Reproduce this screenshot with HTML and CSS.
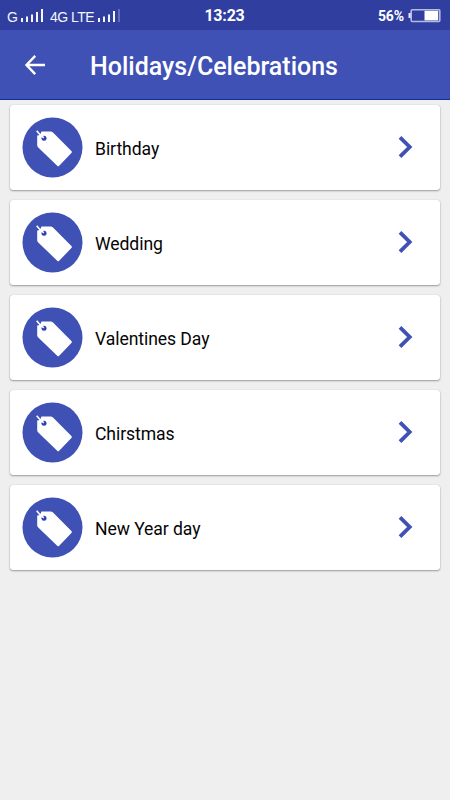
FILE: index.html
```html
<!DOCTYPE html>
<html lang="en">
<head>
<meta charset="utf-8">
<title>Holidays/Celebrations</title>
<link rel="stylesheet" href="styles.css">
</head>
<body>
<svg class="defs" aria-hidden="true">
  <symbol id="tag" viewBox="0 0 61 61">
    <circle cx="30.500" cy="30.500" r="30" fill="#3f51b5"/>
    <path d="M19.500 14.500H28.500Q30 14.500 31 15.500L49.400 34Q50.400 35 49.400 36L37.200 48.700Q36.200 49.700 35.200 48.700L16 30.200Q15.200 29.400 15.200 28.200V18.500L17 18.300L18.700 16.500Z" fill="#fff"/>
    <circle cx="22" cy="21.200" r="2.500" fill="#3040b0"/>
    <path d="M14.700 13.700L17 16.500L21.800 20.800" fill="none" stroke="#fff" stroke-width="1.600"/>
  </symbol>
  <symbol id="next" viewBox="0 0 16 24">
    <path d="M2 2.300L11.700 12L2 21.700" fill="none" stroke="#3f51b5" stroke-width="3.800"/>
  </symbol>
</svg>
<div class="status">
  <div class="signals">
    <span class="net g">G</span>
    <svg class="bars" width="24" height="15" viewBox="0 0 24 15" fill="#f4f5fd"><path d="M0 10h2v4H0zM5 8.500h2V14H5zM10 6.500h2V14h-2zM15 4h2v10h-2zM20 1h2v13h-2z"/></svg>
    <span class="net lte">4G LTE</span>
    <svg class="bars" width="24" height="15" viewBox="0 0 24 15" fill="#f4f5fd"><path d="M0 10h2v4H0zM5 8.500h2V14H5zM10 6.500h2V14h-2zM15 3h2v11h-2z"/><path d="M20 1h2v13h-2z" opacity=".25"/></svg>
  </div>
  <div class="clock">13:23</div>
  <div class="power">
    <span>56%</span>
    <svg width="34" height="15" viewBox="0 0 34 15"><path d="M1.500 5H4v5H1.500Z" fill="#e5e8f8"/><rect x="4.200" y="1.700" width="28.600" height="11.800" rx="1" fill="#303f9f" stroke="#b4bbe2" stroke-width="1.600"/><path d="M17.500 2.800h13.700v9.600H17.500z" fill="#fff"/></svg>
  </div>
</div>
<header class="bar">
  <svg class="back" width="22" height="22" viewBox="0 0 22 22"><path d="M21 11H3M11.200 1.900L2.500 11L11.200 20.100" fill="none" stroke="#fff" stroke-width="2.400"/></svg>
  <h1>Holidays/Celebrations</h1>
</header>
<main class="list">
  <div class="card"><svg class="tag"><use href="#tag"/></svg><span class="label">Birthday</span><svg class="next"><use href="#next"/></svg></div>
  <div class="card"><svg class="tag"><use href="#tag"/></svg><span class="label">Wedding</span><svg class="next"><use href="#next"/></svg></div>
  <div class="card"><svg class="tag"><use href="#tag"/></svg><span class="label">Valentines Day</span><svg class="next"><use href="#next"/></svg></div>
  <div class="card"><svg class="tag"><use href="#tag"/></svg><span class="label">Chirstmas</span><svg class="next"><use href="#next"/></svg></div>
  <div class="card"><svg class="tag"><use href="#tag"/></svg><span class="label">New Year day</span><svg class="next"><use href="#next"/></svg></div>
</main>
</body>
</html>
```
FILE: styles.css
```css
* { box-sizing: border-box; }
body {
  margin: 0;
  height: 800px;
  background: #efefef;
  font-family: Roboto, sans-serif;
  overflow: hidden;
}
svg { display: block; flex: none; }
.defs { position: absolute; width: 0; height: 0; }
.status {
  height: 30px;
  background: #303f9f;
  color: #fff;
  display: grid;
  grid-template-columns: 1fr auto 1fr;
  align-items: center;
  padding: 2px 9px 0 7px;
}
.signals { display: flex; align-items: center; }
.net { font: 14px/16px "Liberation Sans", sans-serif; color: #f4f5fd; white-space: nowrap; padding-top: 1px; }
.g { width: 14px; }
.lte { width: 48px; letter-spacing: -0.5px; }
.signals .bars:nth-child(2) { margin-right: 5px; margin-top: -1px; }
.signals .bars:last-child { margin-top: -1px; }
.clock { font-size: 16px; font-weight: 700; line-height: 28px; padding-left: 1px; letter-spacing: -0.2px; }
.power { display: flex; align-items: center; justify-content: flex-end; gap: 3px; font-size: 14px; font-weight: 700; letter-spacing: -0.1px; }
.power svg { margin-top: -2px; }
.bar {
  height: 70px;
  background: #3f51b5;
  border-bottom: 1px solid #0d2fa5;
  display: flex;
  align-items: center;
  padding-left: 24px;
}
.back { margin-right: 44px; }
.bar h1 {
  margin: 4px 0 0;
  color: #fff;
  font-size: 25px;
  font-weight: 500;
  line-height: 34px;
  white-space: nowrap;
}
.list { display: flex; flex-direction: column; gap: 10px; padding: 5px 10px; }
.card {
  height: 85px;
  display: flex;
  align-items: center;
  padding: 0 26px 0 12px;
  background: #fff;
  border-radius: 3px;
  box-shadow: 0 1px 2px rgba(0, 0, 0, .35), 0 0 1px rgba(0, 0, 0, .2);
}
.tag { width: 61px; height: 61px; }
.label { flex: 1; margin-left: 12px; padding-top: 2px; font-size: 17.6px; line-height: 24px; letter-spacing: -0.08px; color: #050505; }
.next { width: 16px; height: 24px; margin-top: -1px; }
```
